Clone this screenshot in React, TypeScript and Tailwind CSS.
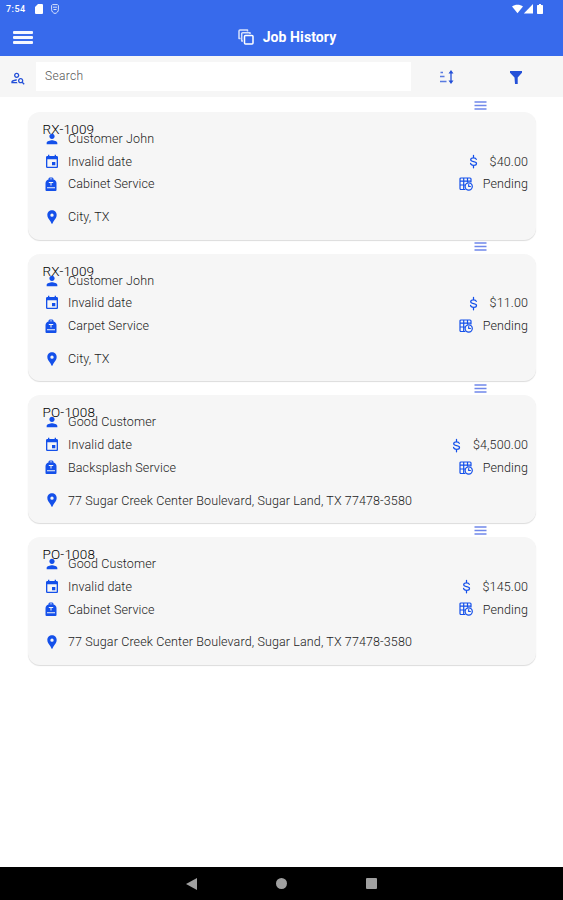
import type { ReactNode } from 'react'
import { MdEvent, MdLocationPin, MdOutlinePersonSearch, MdPerson } from 'react-icons/md'

type Job = {
  code: string
  customer: string
  service: string
  address: string
  price: string
}

const jobs: Job[] = [
  {
    code: 'RX-1009',
    customer: 'Customer John',
    service: 'Cabinet Service',
    address: 'City, TX',
    price: '$40.00',
  },
  {
    code: 'RX-1009',
    customer: 'Customer John',
    service: 'Carpet Service',
    address: 'City, TX',
    price: '$11.00',
  },
  {
    code: 'PO-1008',
    customer: 'Good Customer',
    service: 'Backsplash Service',
    address: '77 Sugar Creek Center Boulevard, Sugar Land, TX 77478-3580',
    price: '$4,500.00',
  },
  {
    code: 'PO-1008',
    customer: 'Good Customer',
    service: 'Cabinet Service',
    address: '77 Sugar Creek Center Boulevard, Sugar Land, TX 77478-3580',
    price: '$145.00',
  },
]

const BagIcon = () => (
  <svg width="14" height="15" viewBox="0 0 14 15" fill="currentColor">
    <path
      fillRule="evenodd"
      d="M4.500 2.500V2C4.500.9 5.500.5 7 .5s2.500.4 2.500 1.500v.5c2 .6 3 2 3 4V13a1 1 0 0 1-1 1h-9a1 1 0 0 1-1-1V6.500c0-2 1-3.400 3-4Zm1.200-.2h2.600V2c0-.3-.4-.5-1.300-.5s-1.300.2-1.300.5v.3ZM4.800 5v1h1.700v2.500h1V6h1.700V5H4.800ZM3 10.300v.9h8v-.9H3Z"
    />
  </svg>
)

const DollarIcon = () => (
  <svg
    width="15"
    height="15"
    viewBox="0 0 24 24"
    fill="none"
    stroke="currentColor"
    strokeWidth="2"
    strokeLinecap="round"
  >
    <path d="M12 2v4M12 18v4M16.500 8.500C16 6.800 14.500 6 12 6c-3 0-4.500 1.200-4.500 3.100 0 4.200 9.300 1.700 9.300 5.900 0 2-1.800 3-4.800 3-2.800 0-4.300-1-4.700-3" />
  </svg>
)

const TableClockIcon = () => (
  <svg
    width="14"
    height="14"
    viewBox="0 0 14 14"
    fill="none"
    stroke="currentColor"
    strokeWidth="1.200"
    strokeLinecap="round"
    strokeLinejoin="round"
  >
    <path d="M6 12.500H2a1 1 0 0 1-1-1V2a1 1 0 0 1 1-1h9a1 1 0 0 1 1 1v3M1 4.200h11M1 8h4.500M4.700 1v11.500M8.500 1v4" />
    <circle cx="9.700" cy="9.500" r="3.600" fill="#f6f6f6" />
    <path d="M9.700 7.500v2h1.700" />
  </svg>
)

const SortIcon = () => (
  <svg width="15" height="14" viewBox="0 0 15 14" fill="none" stroke="currentColor">
    <path d="M1.500 2.500H4M1 6.500h4.500M1 11.500h6.500" strokeWidth="1.500" opacity=".75" />
    <path d="M12 2v10" strokeWidth="1.300" />
    <path d="m12 0 2.500 3.500h-5ZM12 14l2.500-3.500h-5Z" fill="currentColor" stroke="none" />
  </svg>
)

const CopiesIcon = () => (
  <svg
    width="16"
    height="16"
    viewBox="0 0 16 16"
    fill="none"
    stroke="currentColor"
    strokeWidth="1.500"
    strokeLinejoin="round"
  >
    <path
      d="M2.500 9.500H1V2a1 1 0 0 1 1-1h7.500v1.500M5 12H3.700V4.700a1 1 0 0 1 1-1H12V5"
      opacity=".8"
    />
    <rect x="6.500" y="6.500" width="8.500" height="8.500" rx="1" />
  </svg>
)

const StatusBar = () => (
  <div className="flex h-[18px] items-center justify-between pl-[6px] pr-[19px]">
    <div className="flex items-center">
      <span className="w-[29px] pt-px text-[9px] font-medium tracking-[0.5px]">7:54</span>
      <svg width="8" height="10" viewBox="0 0 8 10" fill="currentColor">
        <path d="M3 0h4a1 1 0 0 1 1 1v8a1 1 0 0 1-1 1H1a1 1 0 0 1-1-1V3Z" />
      </svg>
      <svg
        className="ml-2"
        width="8"
        height="10"
        viewBox="0 0 8 10"
        fill="none"
        stroke="currentColor"
      >
        <path d="M1.600.6h4.800l1 1v3.900C7.400 7.500 6 9 4 9.500 2 9 .6 7.500.6 5.500V1.600Z" opacity=".8" />
        <path d="M2 3.200h4M2.500 5.500h3" opacity=".8" />
      </svg>
    </div>
    <svg width="32" height="10" viewBox="0 0 32 10" fill="currentColor">
      <path d="M0 2.500C3 0 8 0 11 2.500L5.500 9.300Z" />
      <path d="M21 0v9.500h-9.200Z" />
      <path d="M27 0h2v1h1.300c.4 0 .7.300.7.700v7.600c0 .4-.3.700-.7.700h-4.600a.7.700 0 0 1-.7-.7V1.700c0-.4.300-.7.700-.7H27Z" />
    </svg>
  </div>
)

const Header = () => (
  <header className="grid h-[38px] grid-cols-[1fr_auto_1fr] items-center">
    <button className="ml-[13px] flex w-5 flex-col gap-[2px]">
      <span className="h-[3px] rounded-[1px] bg-white/95" />
      <span className="h-[3px] rounded-[1px] bg-white/95" />
      <span className="h-[3px] rounded-[1px] bg-white/95" />
    </button>
    <div className="ml-[11px] flex items-center gap-[9px]">
      <CopiesIcon />
      <h1 className="pt-px text-[14px] font-bold tracking-[0.1px]">Job History</h1>
    </div>
  </header>
)

const SearchBar = () => (
  <div className="flex h-[41px] items-center bg-[#f6f6f6] text-[#2450d8]">
    <MdOutlinePersonSearch className="ml-[10px] mr-[10px] mt-[2px] size-4" />
    <input
      placeholder="Search"
      className="h-[29px] w-[375px] bg-white px-[9px] pb-px text-[12px] font-light tracking-[0.35px] placeholder:text-[#555]"
    />
    <div className="ml-[28px] mt-px">
      <SortIcon />
    </div>
    <svg className="ml-[56px] mt-px" width="12" height="13" viewBox="0 0 12 13" fill="currentColor">
      <path d="M0 0h12v1.800L7.700 6.500V13H5L4.500 6.500 0 1.800Z" />
    </svg>
  </div>
)

const Row = ({ icon, children }: { icon: ReactNode; children: ReactNode }) => (
  <div className="flex h-[22.7px] items-center">
    <span className="flex w-[24px] text-[#1450ea]">{icon}</span>
    <span className="pt-px">{children}</span>
  </div>
)

const JobCard = ({ job }: { job: Job }) => (
  <li className="h-[141.7px]">
    <div className="ml-[446px] flex h-[15px] items-center pt-px text-[#7088ea]">
      <svg width="13" height="9" viewBox="0 0 13 9" stroke="currentColor" strokeWidth="1.500">
        <path d="M.5 1h12M.5 4.500h12M.5 8h12" />
      </svg>
    </div>
    <div className="h-[127.5px] rounded-[12px] bg-[#f6f6f6] pl-[14.5px] pr-2 pt-[7px] text-[12.5px] font-light tracking-[0.12px] text-[#222] shadow-[0_1px_1px_rgba(0,0,0,0.14)]">
      <h2 className="h-5 text-[13.5px] leading-5 tracking-[0.2px] text-black">{job.code}</h2>
      <div className="-mt-[11.4px] flex justify-between">
        <div className="pl-[1.5px]">
          <Row icon={<MdPerson className="size-4" />}>{job.customer}</Row>
          <Row icon={<MdEvent className="size-4" />}>Invalid date</Row>
          <Row icon={<BagIcon />}>{job.service}</Row>
        </div>
        <div className="flex flex-col items-end pt-[22.7px]">
          <Row icon={<DollarIcon />}>{job.price}</Row>
          <Row icon={<TableClockIcon />}>Pending</Row>
        </div>
      </div>
      <div className="mt-[10px] pl-[1.5px]">
        <Row icon={<MdLocationPin className="size-4" />}>{job.address}</Row>
      </div>
    </div>
  </li>
)

export default function App() {
  return (
    <div className="flex h-[900px] w-[563px] flex-col overflow-hidden bg-white font-['Roboto',sans-serif]">
      <div className="h-[56px] bg-[#376aec] text-white">
        <StatusBar />
        <Header />
      </div>
      <SearchBar />
      <ul className="flex-1 pl-[28px] pr-[27px]">
        {jobs.map((job, i) => (
          <JobCard key={i} job={job} />
        ))}
      </ul>
      <nav className="flex h-[33px] items-center justify-center gap-[79px] bg-black text-[#a0a0a0]">
        <svg width="11" height="12" viewBox="0 0 11 12" fill="currentColor">
          <path d="M11 0v12L0 6Z" />
        </svg>
        <span className="size-[11px] rounded-full bg-current" />
        <span className="size-[11px] rounded-[1px] bg-current" />
      </nav>
    </div>
  )
}
